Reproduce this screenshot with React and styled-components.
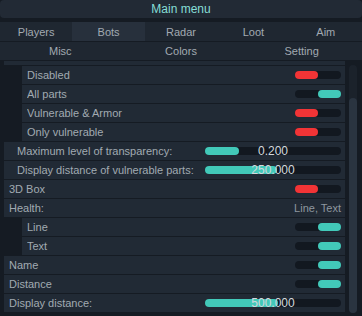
import React, { useLayoutEffect, useRef } from 'react';
import styled, { createGlobalStyle } from 'styled-components';

const Global = createGlobalStyle`
  html, body {
    margin: 0;
    padding: 0;
    background: #141a21;
  }
  body {
    font-family: 'Liberation Sans', Arial, sans-serif;
    font-size: 11px;
  }
`;

const Window = styled.div`
  width: 362px;
  height: 316px;
  display: flex;
  flex-direction: column;
  background: #151b23;
  overflow: hidden;
`;
const TitleBar = styled.div`
  height: 18px;
  display: flex;
  align-items: center;
  justify-content: center;
  background: #222a35;
  border-radius: 4px;
  color: #86ded6;
  font-size: 12px;
  margin-bottom: 4px;
`;
const TabRow = styled.div`
  display: grid;
  grid-template-columns: repeat(${(p) => p.cols}, 1fr);
  height: ${(p) => p.h}px;
  background: #1f2731;
  border-bottom: 1px solid #151b23;
`;
const Tab = styled.div`
  display: flex;
  align-items: center;
  justify-content: center;
  color: #a2aab2;
  font-size: 11px;
  background: ${(p) => (p.active ? '#27303c' : 'transparent')};
`;
const Body = styled.div`
  flex: 1;
  display: flex;
  min-height: 0;
`;
const Viewport = styled.div`
  flex: 1;
  overflow: hidden;
  padding-left: 4px;
`;
const List = styled.div`
  display: flex;
  flex-direction: column;
  gap: 1px;
  padding-bottom: 6px;
`;
const Row = styled.div`
  height: 18px;
  flex-shrink: 0;
  display: flex;
  align-items: center;
  background: #212a35;
  margin-left: ${(p) => (p.indent ? 18 : 0)}px;
  padding-left: ${(p) => p.pad || 5}px;
  padding-right: 4px;
  color: #a2aab2;
`;
const Label = styled.span`
  flex: 1;
  white-space: nowrap;
  overflow: hidden;
`;
const Hint = styled.span`
  color: #8e979f;
`;
const Toggle = styled.div`
  width: 46px;
  height: 8px;
  border-radius: 4px;
  background: #121820;
  display: flex;
  justify-content: ${(p) => (p.on ? 'flex-end' : 'flex-start')};
`;
const Knob = styled.div`
  width: 23px;
  height: 8px;
  border-radius: 4px;
  background: ${(p) => (p.on ? '#42c9b9' : '#f23436')};
`;
const Slider = styled.div`
  position: relative;
  width: 136px;
  height: 8px;
  border-radius: 4px;
  background: #121820;
  display: flex;
  flex-shrink: 0;
`;
const Fill = styled.div`
  height: 100%;
  border-radius: 4px;
  background: #42c9b9;
`;
const Value = styled.span`
  position: absolute;
  left: 0;
  right: 0;
  top: -3px;
  text-align: center;
  color: #d3d8dd;
  font-size: 12px;
  line-height: 14px;
`;
const ScrollBar = styled.div`
  width: 8px;
  margin: 4px 5px 3px 4px;
  border-radius: 4px;
  background: #1b222b;
  display: flex;
  flex-direction: column;
  padding-top: 33px;
`;
const Thumb = styled.div`
  flex: 1;
  border-radius: 4px;
  background: #2a3440;
`;

const ToggleRow = ({ label, on, indent }) => (
  <Row indent={indent}>
    <Label>{label}</Label>
    <Toggle on={on}>
      <Knob on={on} />
    </Toggle>
  </Row>
);

const SliderRow = ({ label, value, pct, pad = 5 }) => (
  <Row pad={pad}>
    <Label>{label}</Label>
    <Slider>
      <Fill style={{ width: `${pct}%` }} />
      <Value>{value}</Value>
    </Slider>
  </Row>
);

export default function App() {
  const ref = useRef(null);
  useLayoutEffect(() => {
    if (ref.current) ref.current.scrollTop = 14;
  }, []);

  return (
    <Window>
      <Global />
      <TitleBar>Main menu</TitleBar>
      <TabRow cols={5} h={19}>
        <Tab>Players</Tab>
        <Tab active>Bots</Tab>
        <Tab>Radar</Tab>
        <Tab>Loot</Tab>
        <Tab>Aim</Tab>
      </TabRow>
      <TabRow cols={3} h={18}>
        <Tab>Misc</Tab>
        <Tab>Colors</Tab>
        <Tab>Setting</Tab>
      </TabRow>
      <Body>
        <Viewport ref={ref}>
          <List>
            <Row />
            <ToggleRow indent label="Disabled" on={false} />
            <ToggleRow indent label="All parts" on />
            <ToggleRow indent label="Vulnerable & Armor" on={false} />
            <ToggleRow indent label="Only vulnerable" on={false} />
            <SliderRow pad={13} label="Maximum level of transparency:" value="0.200" pct={25} />
            <SliderRow pad={13} label="Display distance of vulnerable parts:" value="250.000" pct={53} />
            <ToggleRow label="3D Box" on={false} />
            <Row>
              <Label>Health:</Label>
              <Hint>Line, Text</Hint>
            </Row>
            <ToggleRow indent label="Line" on />
            <ToggleRow indent label="Text" on />
            <ToggleRow label="Name" on />
            <ToggleRow label="Distance" on />
            <SliderRow label="Display distance:" value="500.000" pct={54} />
          </List>
        </Viewport>
        <ScrollBar>
          <Thumb />
        </ScrollBar>
      </Body>
    </Window>
  );
}
